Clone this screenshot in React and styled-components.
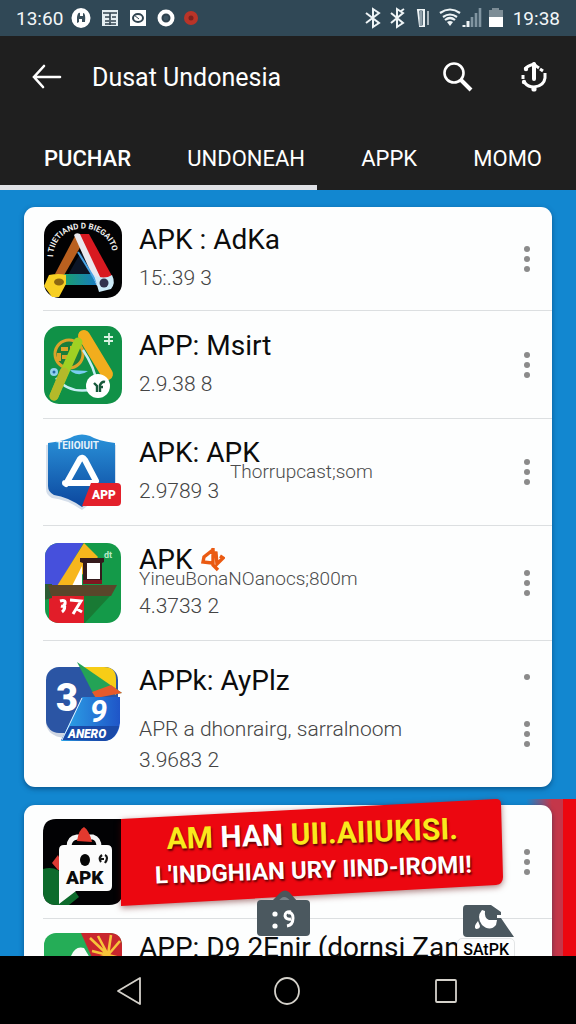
import styled, { createGlobalStyle } from 'styled-components';

const App = () => {
  return (
    <>
      <GlobalStyle />
      <Screen>
        <StatusBar>
          <StatusGroup>
            <Clock>13:60</Clock>
            <NotificationIcons />
          </StatusGroup>
          <StatusGroup>
            <SystemIcons />
            <Clock>19:38</Clock>
          </StatusGroup>
        </StatusBar>

        <Header>
          <Toolbar>
            <IconButton aria-label="Back">
              <svg width="30" height="26" viewBox="0 0 30 26" fill="none" stroke="#fff" strokeWidth="2.6" strokeLinecap="round">
                <path d="M12 2 2 13l9 10M2 13h26" />
              </svg>
            </IconButton>
            <ScreenTitle>Dusat Undonesia</ScreenTitle>
            <Actions>
              <IconButton aria-label="Search">
                <svg width="32" height="32" viewBox="0 0 32 32" fill="none" stroke="#fff">
                  <circle cx="12" cy="12" r="9.5" strokeWidth="2.6" />
                  <path d="m19 19 10 10" strokeWidth="4" />
                </svg>
              </IconButton>
              <IconButton aria-label="Update">
                <svg width="28" height="32" viewBox="0 0 28 32" fill="none" stroke="#fff" strokeWidth="3">
                  <path d="M14 18V3" strokeWidth="4" strokeLinecap="round" />
                  <path d="M5 8q2-3 9-5 2 2 5 4" strokeWidth="3" />
                  <path d="M3 14v4M5 22q3 4 9 4 10-1 11-9v-5M20 8l3 2" />
                  <circle cx="14" cy="28" r="2.6" fill="#fff" stroke="none" />
                  <circle cx="4" cy="21" r="2.2" fill="#fff" stroke="none" />
                  <circle cx="6" cy="8" r="2.2" fill="#fff" stroke="none" />
                </svg>
              </IconButton>
            </Actions>
          </Toolbar>
          <Tabs>
            <Tab $active>PUCHAR</Tab>
            <Tab>UNDONEAH</Tab>
            <Tab>APPK</Tab>
            <Tab>MOMO</Tab>
          </Tabs>
          <Indicator />
        </Header>

        <Content>
          <Card>
            <Row $height={104}>
              <CompassIcon />
              <Info>
                <Title>APK : AdKa</Title>
                <Meta>15:.39 3</Meta>
              </Info>
              <More />
            </Row>
            <Row $height={108}>
              <GreenIcon />
              <Info>
                <Title>APP: Msirt</Title>
                <Meta>2.9.38 8</Meta>
              </Info>
              <More />
            </Row>
            <Row $height={107}>
              <ShieldIcon />
              <Info>
                <Title>APK: APK</Title>
                <Domain $indent={91}>Thorrupcast;som</Domain>
                <Meta>2.9789 3</Meta>
              </Info>
              <More />
            </Row>
            <Row $height={115}>
              <BoatIcon />
              <Info $gap={8}>
                <Title>
                  APK
                  <svg width="24" height="26" viewBox="0 0 24 26" fill="none" stroke="#ea5a12" strokeWidth="3.4">
                    <path d="M13 2 3 10l-1 5 9 1M12 1v17l5 5M9 5l6 1 1 11 6-6-3-2" />
                  </svg>
                </Title>
                <Domain>YineuBonaNOanocs;800m</Domain>
                <Meta>4.3733 2</Meta>
              </Info>
              <More />
            </Row>
            <Row $height={146} $top={21}>
              <PlayIcon />
              <Info $gap={14}>
                <Title>APPk: AyPlz</Title>
                <div>
                  <Meta $tight>APR a dhonrairg, sarralnoom</Meta>
                  <Meta $tight>3.9683 2</Meta>
                </div>
              </Info>
              <MoreColumn>
                <Dot />
                <More />
              </MoreColumn>
            </Row>
          </Card>

          <Promoted>
            <RedEdge />
            <Card>
              <Row $height={114}>
                <BagIcon />
                <Info />
                <More />
              </Row>
              <Row $height={96} $top={10}>
                <FruitIcon />
                <Info>
                  <Title>APP: D9 2Enir (dornsi Zan</Title>
                </Info>
              </Row>
            </Card>
            <Banner>
              <BannerShape viewBox="0 0 384 108" preserveAspectRatio="none">
                <path d="M0 20 376 0q5 0 5 5l2 73q0 7-7 8L0 107z" fill="#ec0710" />
              </BannerShape>
              <BannerText>
                <BannerTop>
                  <mark>AM</mark> HAN <mark>UII.AIIUKISI.</mark>
                </BannerTop>
                <BannerBottom>L'INDGHIAN URY IIND-IROMI!</BannerBottom>
              </BannerText>
            </Banner>
            <Bag>
              <svg width="54" height="48" viewBox="0 0 54 48">
                <path d="M14 12 24 2q4-3 8 0l9 10z" fill="#4b565b" />
                <path d="M21 12q6-10 13 0z" fill="#788389" />
                <rect x="0" y="10" width="53" height="36" rx="4" fill="#4b585f" />
                <g fill="#fff">
                  <circle cx="18" cy="24" r="2.6" />
                  <circle cx="18" cy="36" r="2.6" />
                </g>
                <path d="M34 22q-6-1-6 4 1 4 6 3M31 23q5-1 5 5 0 7-6 8" fill="none" stroke="#fff" strokeWidth="3" />
              </svg>
            </Bag>
            <Tag>
              <svg width="52" height="33" viewBox="0 0 52 33">
                <path d="M3 0h25l10 7v6l13 19H4q-4 0-4-4V4q0-4 3-4z" fill="#4b585f" />
                <path d="M19 5q-6 7 0 15 8 7 14 0l1-5h-8q-5-2-4-9z" fill="#fff" />
                <path d="M15 16q-5 6-2 8 4 0 4-3zM34 10h6v3h-6z" fill="#fff" />
              </svg>
              <TagLabel>SAtPK</TagLabel>
            </Tag>
          </Promoted>
        </Content>

        <NavBar>
          <NavButton aria-label="Back">
            <svg width="26" height="30" viewBox="0 0 26 30" fill="none" stroke="#d4d1ca" strokeWidth="1.8" strokeLinejoin="round">
              <path d="M24 2v26L2 15z" />
            </svg>
          </NavButton>
          <NavButton aria-label="Home">
            <svg width="28" height="30" viewBox="0 0 28 30" fill="none" stroke="#d4d1ca" strokeWidth="1.8">
              <ellipse cx="13" cy="15" rx="12" ry="13" />
            </svg>
          </NavButton>
          <NavButton aria-label="Recent apps">
            <svg width="26" height="30" viewBox="0 0 26 30" fill="none" stroke="#d4d1ca" strokeWidth="1.8">
              <rect x="2" y="4" width="20" height="22" rx="1" />
            </svg>
          </NavButton>
        </NavBar>
      </Screen>
    </>
  );
};

const More = () => (
  <MoreButton aria-label="More options">
    <Dot />
    <Dot />
    <Dot />
  </MoreButton>
);

const NotificationIcons = () => (
  <svg width="128" height="22" viewBox="0 0 128 22">
    <ellipse cx="10" cy="11" rx="9.5" ry="10" fill="#fff" />
    <path d="M6 16V10q1-5 3-4v3h3V6q3 0 2 9h-3v-3H8v3z" fill="#3a4f5b" />
    <rect x="31" y="3" width="16" height="16" fill="#e4eef2" />
    <path d="M32 6h14M34 10h5M41 10h4M34 14h4M40 14h5M34 17h11M39 6v12" stroke="#30434f" strokeWidth="1.6" />
    <rect x="59" y="3" width="16" height="16" fill="#fff" />
    <ellipse cx="67" cy="11" rx="5" ry="4" fill="none" stroke="#30434f" strokeWidth="2" />
    <path d="m63 8 5 4" stroke="#30434f" />
    <circle cx="95" cy="11" r="6.5" fill="#30434f" stroke="#fff" strokeWidth="4" />
    <circle cx="95" cy="11" r="2.5" fill="#3d5462" />
    <circle cx="120" cy="11" r="7" fill="#b93428" />
    <circle cx="120" cy="11" r="2.5" fill="#7c211d" />
  </svg>
);

const SystemIcons = () => (
  <svg width="140" height="22" viewBox="0 0 140 22" fill="none" stroke="#eef4f6" strokeWidth="2">
    <path d="m1 6 13 10-6 4V2l6 4L1 16" />
    <path d="m26 6 12 10-6 4V2l6 4-12 10M36 4l3-2" />
    <path d="M53 3h6v16h-4z" />
    <path d="M56 3v16" stroke="#8fa0aa" strokeWidth="3" />
    <path d="M63 4v14" stroke="#a9b6bd" strokeWidth="2" />
    <path d="M75 6q10-7 20 0M78 10q7-5 14 0M80 13q5-4 10 0" strokeWidth="2.2" />
    <path d="m82 15 3 4 3-4q-3-2-6 0z" fill="#eef4f6" stroke="none" />
    <path d="M99 20v-2M103 20v-6" strokeWidth="3" />
    <path d="M107 20V10M111 20V6M115 20V1" stroke="#8195a1" strokeWidth="2.6" />
    <path d="M124 3h3V1h7v2h4v7h-14z" fill="#7d8d96" stroke="none" />
    <path d="M124 10h14v10h-14z" fill="#fff" stroke="none" />
  </svg>
);

const CompassIcon = () => (
  <AppIcon viewBox="0 0 78 78" $height={78}>
    <defs>
      <linearGradient id="teal">
        <stop offset="0" stopColor="#1aa06e" />
        <stop offset="1" stopColor="#1778c9" />
      </linearGradient>
      <path id="arc" d="M9 37C10 -1 68 -1 69 37" />
    </defs>
    <rect width="78" height="78" rx="15" fill="#020203" />
    <text fontFamily="Roboto, sans-serif" fontSize="8" fontWeight="700" fill="#eee">
      <textPath href="#arc">I TIIETIAND D BIEGAITO</textPath>
    </text>
    <path d="M31 16 38 24 19 57 11 54z" fill="#b9601f" />
    <path d="M37 32 53 55H24z" fill="#0c1526" />
    <path d="M20 54h36v11H20z" fill="url(#teal)" />
    <path d="M31 14h14l23 42-12 6z" fill="#d81920" />
    <path d="M30 15q2-3 6-1l22 47-5 5z" fill="#e9e8ee" />
    <path d="M34 32 55 66" stroke="#4aa4e6" strokeWidth="2" />
    <path d="M50 55q10 5 18 0 4 8-1 14l-12 3z" fill="#cdeaf8" />
    <circle cx="60" cy="63" r="4.5" fill="#33314d" />
    <path d="M5 55q10-2 17 0v9l-7 13H8L0 66z" fill="#f7cf23" />
    <ellipse cx="15" cy="62" rx="5" ry="3.5" fill="#8b6712" />
  </AppIcon>
);

const GreenIcon = () => (
  <AppIcon viewBox="0 0 78 78" $height={78}>
    <rect width="78" height="78" rx="15" fill="#109147" />
    <circle cx="25" cy="28" r="14" fill="#1b7d3a" stroke="#dba32a" strokeWidth="3" />
    <path d="M17 23h7M28 20v8M18 31h8M15 27v8" stroke="#dba32a" strokeWidth="4" />
    <path d="M39 24q12 18 14 34M12 52q14 17 38 11" fill="none" stroke="#c4edf3" strokeWidth="2.5" />
    <path d="m26 44 18 1q-8 6-16 1z" fill="#78cdf0" />
    <circle cx="10" cy="46" r="4" fill="#8fd1ee" />
    <circle cx="10" cy="46" r="1.5" fill="#2466a6" />
    <path d="M40 10 63 48" stroke="#f2ad1d" strokeWidth="12" strokeLinecap="round" />
    <path d="M34 16 10 70" stroke="#a0d023" strokeWidth="9" strokeLinecap="round" />
    <path d="m20 46-10 24" stroke="#b5b92a" strokeWidth="9" strokeLinecap="round" />
    <circle cx="54" cy="60" r="12" fill="#fff" />
    <path d="m50 57 3 3v6M56 66v-7q2-4 5-3M55 61h4" fill="none" stroke="#16583a" strokeWidth="2.4" />
    <path d="M65 7v12M60 11h9M60 15h9" stroke="#d9f2e2" strokeWidth="1.8" />
  </AppIcon>
);

const ShieldIcon = () => (
  <AppIcon viewBox="0 0 78 78" $height={78}>
    <defs>
      <linearGradient id="shield" x1="0" y1="0" x2="0" y2="1">
        <stop offset="0" stopColor="#2a93da" />
        <stop offset="1" stopColor="#0c479e" />
      </linearGradient>
    </defs>
    <path d="M2 12Q22 9 36 2q18 8 36 10v50q-20 3-34 15Q22 66 8 65q-6-3-6-9z" fill="#d5dfeb" />
    <path d="M4 10Q22 8 30 3q8-3 16 0 8 5 25 7v50q-19 3-33 14Q24 64 10 62q-6-3-6-9z" fill="url(#shield)" />
    <text x="12" y="16" fontFamily="Roboto, sans-serif" fontSize="10" fontWeight="700" fill="#e8f3fb">TEIIOIUIT</text>
    <path d="M22 51 36 26q2-3 5 1l11 21M21 50h30" fill="none" stroke="#fff" strokeWidth="6" strokeLinejoin="round" strokeLinecap="round" />
    <path d="M47 50h26q4 0 4 4v15q0 4-4 4H38z" fill="#e3202b" />
    <text x="48" y="66" fontFamily="Roboto, sans-serif" fontSize="12" fontWeight="900" fill="#fff">APP</text>
  </AppIcon>
);

const BoatIcon = () => (
  <AppIcon viewBox="0 0 78 82" $height={82}>
    <defs>
      <clipPath id="boat">
        <rect x="1" y="1" width="76" height="80" rx="14" />
      </clipPath>
    </defs>
    <g clipPath="url(#boat)">
      <path d="M0 0h78v82H0z" fill="#149a49" />
      <path d="M0 0h40L14 44 0 58z" fill="#4650dc" />
      <path d="M40 1 54 15 28 44H13z" fill="#f7b61c" />
      <path d="M38 24v20H28z" fill="#fff" />
      <path d="M5 54h35v28H5z" fill="#e21d29" />
      <path d="M40 82V54h26z" fill="#197a34" />
      <path d="M0 58V42h8v14z" fill="#2c5b34" />
    </g>
    <path d="M4 43h69l-6 11H7z" fill="#59462a" />
    <path d="M36 16h24v4l-2 1v21H39V21l-3-1z" fill="#351a1c" />
    <path d="M43 21h13v16H43z" fill="#fff" />
    <path d="M39 38h19v4H39z" fill="#7e1720" />
    <text x="60" y="16" fontFamily="Roboto, sans-serif" fontSize="9" fontWeight="700" fill="#bdebc8">dt</text>
    <path d="M16 59q6-2 5 3-1 3-4 2M20 61q2 6-2 9M26 58l11 1-8 13M33 67l5 3" fill="none" stroke="#fff" strokeWidth="3" />
  </AppIcon>
);

const PlayIcon = () => (
  <AppIcon viewBox="0 0 78 80" $height={80}>
    <defs>
      <linearGradient id="panel">
        <stop offset="0" stopColor="#2da7e8" />
        <stop offset="1" stopColor="#1f55c8" />
      </linearGradient>
    </defs>
    <path d="M2 18v44q2 12 18 14l30-8V18z" fill="#cfd6e2" />
    <rect x="2" y="5" width="72" height="66" rx="13" fill="#2b55a4" />
    <path d="M36 5h24q12 0 12 12v16z" fill="#f7cd16" />
    <path d="M33 0 78 31 51 35z" fill="#24a356" />
    <path d="M67 23 78 31 52 36 48 30z" fill="#e65a2b" />
    <path d="M38 35h38v26q-2 16-15 18H17z" fill="url(#panel)" />
    <path d="M17 78 26 64h49q-4 14-14 15z" fill="#1a4aa8" />
    <path d="m18 78 20-42" stroke="#e5f2ff" strokeWidth="1" />
    <text x="12" y="49" fontFamily="Roboto, sans-serif" fontSize="38" fontWeight="900" fill="#fff">3</text>
    <text x="46" y="60" fontFamily="Roboto, sans-serif" fontSize="31" fontWeight="700" fontStyle="italic" fill="#fff">9</text>
    <text x="24" y="76" fontFamily="Roboto, sans-serif" fontSize="12" fontWeight="900" fontStyle="italic" fill="#fff">ANERO</text>
  </AppIcon>
);

const BagIcon = () => (
  <AppIcon viewBox="0 0 80 86" $height={86}>
    <path d="M13 0h67v71q0 15-14 15H14Q0 86 0 72V14Q0 0 13 0z" fill="#020204" />
    <path d="M0 50q14-4 22 8l14 20-10 8H14Q0 86 0 72z" fill="#0d6b2c" />
    <path d="m9 44 6-8 6 14-6 1z" fill="#dd3b34" />
    <path d="M26 28q0-9 8-10h16q6 2 6 10" fill="none" stroke="#f5f5f5" strokeWidth="5" />
    <path d="M34 22q2-12 7-14 5 3 8 15z" fill="#e2392e" />
    <path d="M21 26h43q5 0 5 5v36q0 5-5 5H33L16 85V31q0-5 5-5z" fill="#fcfcfc" />
    <ellipse cx="42" cy="41" rx="5" ry="6" fill="#050505" />
    <path d="M59 36q-4 3-1 7M62 36q4 2 0 8M58 40h3" fill="none" stroke="#151515" strokeWidth="2.2" />
    <text x="23" y="65" fontFamily="Roboto, sans-serif" fontSize="19" fontWeight="900" fill="#0b0b0b">APK</text>
  </AppIcon>
);

const FruitIcon = () => (
  <AppIcon viewBox="0 -4 78 82" $height={82}>
    <rect width="78" height="78" rx="12" fill="#25ad57" />
    <path d="M37 0h28q13 0 13 13v32H57z" fill="#c8262d" />
    <path d="M26 26q4-14 14-11l12 20H26z" fill="#f7fbf7" />
    <path d="M64 22 46 5M64 22 54 3M64 22 67 2M64 22 76 8M64 22 48 18M64 22 50 26M64 22l12 3" stroke="#f7c43a" strokeWidth="2.6" />
  </AppIcon>
);

const GlobalStyle = createGlobalStyle`
  * {
    box-sizing: border-box;
  }

  body {
    margin: 0;
    font-family: Roboto, "Liberation Sans", sans-serif;
  }

  button {
    border: 0;
    padding: 0;
    background: none;
    color: inherit;
    font: inherit;
  }

  svg {
    display: block;
  }
`;

const Screen = styled.div`
  height: 100vh;
  display: flex;
  flex-direction: column;
  background-color: #1287d0;
`;

const StatusBar = styled.div`
  flex: none;
  height: 36px;
  padding: 0 16px;
  display: flex;
  align-items: center;
  justify-content: space-between;
  background-color: #304856;
  color: #f2f6f8;
`;

const StatusGroup = styled.div`
  display: flex;
  align-items: center;
  gap: 8px;
`;

const Clock = styled.span`
  font-size: 19px;
`;

const Header = styled.header`
  flex: none;
  background-color: #1f1f1f;
  color: white;
`;

const Toolbar = styled.div`
  height: 82px;
  padding: 0 28px 0 32px;
  display: flex;
  align-items: center;
`;

const IconButton = styled.button`
  display: flex;
`;

const ScreenTitle = styled.h1`
  margin: 0 0 0 30px;
  font-size: 25px;
  font-weight: 400;
`;

const Actions = styled.div`
  margin-left: auto;
  display: flex;
  align-items: center;
  gap: 46px;
`;

const Tabs = styled.nav`
  height: 67px;
  padding: 14px 34px 0 44px;
  display: flex;
  align-items: center;
  justify-content: space-between;
`;

const Tab = styled.button`
  font-size: 22px;
  font-weight: ${(props) => (props.$active ? 500 : 400)};
`;

const Indicator = styled.div`
  width: 55%;
  height: 5px;
  background-color: #dfe1e6;
`;

const Content = styled.main`
  flex: 1;
  min-height: 0;
  overflow: hidden;
  padding-top: 17px;
`;

const Card = styled.section`
  position: relative;
  margin: 0 24px;
  border-radius: 11px;
  background-color: #fdfefe;
  box-shadow: 0 2px 5px rgba(0, 40, 80, 0.5);
`;

const Row = styled.article`
  min-height: ${(props) => props.$height}px;
  margin-left: 19px;
  padding-right: 10px;
  padding-top: ${(props) => props.$top || 0}px;
  display: flex;
  align-items: ${(props) => (props.$top ? 'flex-start' : 'center')};
  border-bottom: 1px solid #dcdfe1;

  &:last-child {
    border-bottom: 0;
  }
`;

const AppIcon = styled.svg`
  flex: none;
  width: 80px;
  height: ${(props) => props.$height}px;
`;

const Info = styled.div`
  position: relative;
  flex: 1;
  min-width: 0;
  margin-left: 16px;
  display: flex;
  flex-direction: column;
  gap: ${(props) => props.$gap || 0}px;
`;

const Title = styled.h2`
  margin: 0;
  display: flex;
  align-items: center;
  gap: 8px;
  font-size: 28px;
  font-weight: 400;
  line-height: 38px;
  white-space: nowrap;
  color: #0c0c0c;
`;

const Meta = styled.p`
  margin: 0;
  font-size: 21px;
  font-weight: 300;
  line-height: ${(props) => (props.$tight ? 31 : 38)}px;
  color: #444;
  white-space: nowrap;
`;

const Domain = styled.span`
  position: absolute;
  top: 28px;
  left: ${(props) => props.$indent || 0}px;
  font-size: 19px;
  font-weight: 300;
  line-height: 20px;
  color: #4c4c4c;
`;

const MoreButton = styled.button`
  flex: none;
  width: 30px;
  display: flex;
  flex-direction: column;
  align-items: center;
  gap: 4px;
`;

const Dot = styled.span`
  width: 6px;
  height: 6px;
  border-radius: 50%;
  background-color: #8b8b8b;
`;

const MoreColumn = styled.div`
  display: flex;
  flex-direction: column;
  align-items: center;
  gap: 41px;
  padding-top: 12px;
`;

const Promoted = styled.div`
  position: relative;
  margin-top: 18px;
`;

const RedEdge = styled.div`
  position: absolute;
  top: -6px;
  right: 0;
  bottom: 0;
  width: 50px;
  border-right: 13px solid #ec0710;
  background: linear-gradient(to right, #1287d0, #c4374a 70%);
`;

const Banner = styled.div`
  position: absolute;
  top: -6px;
  left: 121px;
  right: 72px;
  height: 108px;
`;

const BannerShape = styled.svg`
  position: absolute;
  width: 100%;
  height: 100%;
  filter: drop-shadow(0 2px 3px rgba(90, 0, 0, 0.5));
`;

const BannerText = styled.div`
  position: relative;
  padding-top: 16px;
  transform: rotate(-2deg);
  color: white;
  font-weight: 700;
  text-align: center;
  text-shadow: 1px 2px 2px #5c0205;
  white-space: nowrap;
`;

const BannerTop = styled.div`
  font-size: 30px;
  line-height: 38px;

  mark {
    background: none;
    color: #fae91c;
  }
`;

const BannerBottom = styled.div`
  font-size: 24px;
  line-height: 34px;
`;

const Bag = styled.div`
  position: absolute;
  top: 85px;
  left: 257px;
`;

const Tag = styled.div`
  position: absolute;
  top: 100px;
  right: 61px;
  display: flex;
  flex-direction: column;
  align-items: flex-end;
`;

const TagLabel = styled.span`
  padding: 0 5px;
  border: 1px solid #e3e5e6;
  border-radius: 5px;
  background-color: #fdfefe;
  font-size: 16px;
  font-weight: 500;
  line-height: 22px;
`;

const NavBar = styled.nav`
  flex: none;
  height: 68px;
  padding: 2px 116px 0;
  display: flex;
  align-items: center;
  justify-content: space-between;
  background-color: black;
`;

const NavButton = styled.button`
  display: flex;
`;

export default App;
